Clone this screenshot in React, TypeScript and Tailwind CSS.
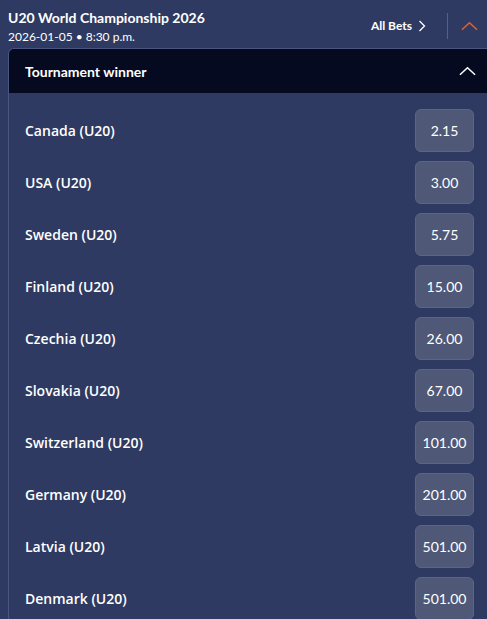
const rows: [string, string][] = [
  ["Canada (U20)", "2.15"],
  ["USA (U20)", "3.00"],
  ["Sweden (U20)", "5.75"],
  ["Finland (U20)", "15.00"],
  ["Czechia (U20)", "26.00"],
  ["Slovakia (U20)", "67.00"],
  ["Switzerland (U20)", "101.00"],
  ["Germany (U20)", "201.00"],
  ["Latvia (U20)", "501.00"],
  ["Denmark (U20)", "501.00"],
]

function ChevronUp({ className }: { className: string }) {
  return (
    <svg viewBox="0 0 18 10" className={className} fill="none" stroke="currentColor" strokeWidth="1.6">
      <path d="M1 9 L9 1.5 L17 9" />
    </svg>
  )
}

export default function App() {
  return (
    <div className="w-full h-[619px] overflow-hidden bg-[#2f3a62] text-white font-['Lato',sans-serif]">
      <div className="flex items-center pl-2 pr-[9px] pt-[4px] h-[48px]">
        <div className="flex-1">
          <div className="text-[14px] font-bold leading-[20px]">U20 World Championship 2026</div>
          <div className="text-[12px] leading-[16px] mt-[1px]">2026-01-05 • 8:30 p.m.</div>
        </div>
        <div className="flex items-center gap-[6px] text-[12px] font-bold mr-[21px]">
          All Bets
          <svg viewBox="0 0 8 12" className="w-[8px] h-[12px]" fill="none" stroke="currentColor" strokeWidth="1.3">
            <path d="M1.5 1 L6.5 6 L1.5 11" />
          </svg>
        </div>
        <div className="w-px h-[26px] bg-[#566084]" />
        <ChevronUp className="w-[17px] h-[10px] ml-[13px] text-[#e0602f]" />
      </div>
      <div className="ml-2 border-l border-t border-[#4a5580] rounded-tl-[6px] overflow-hidden">
        <div className="h-[44px] bg-[#050a20] flex items-center pl-4 pr-[11px]">
          <div className="flex-1 text-[14px] font-bold">Tournament winner</div>
          <ChevronUp className="w-[17px] h-[10px] text-white" />
        </div>
        <div className="flex flex-col gap-[9px] pt-[16px] pl-4 pr-[13px] font-['Open_Sans',sans-serif]">
          {rows.map(([name, odd]) => (
            <div key={name} className="flex items-center justify-between">
              <span className="text-[14px] font-semibold">{name}</span>
              <div className="w-[59px] h-[43px] rounded-[6px] bg-[#4f5877] border border-[#5c6586] flex items-center justify-center font-['Lato',sans-serif] text-[14px]">
                {odd}
              </div>
            </div>
          ))}
        </div>
      </div>
    </div>
  )
}
